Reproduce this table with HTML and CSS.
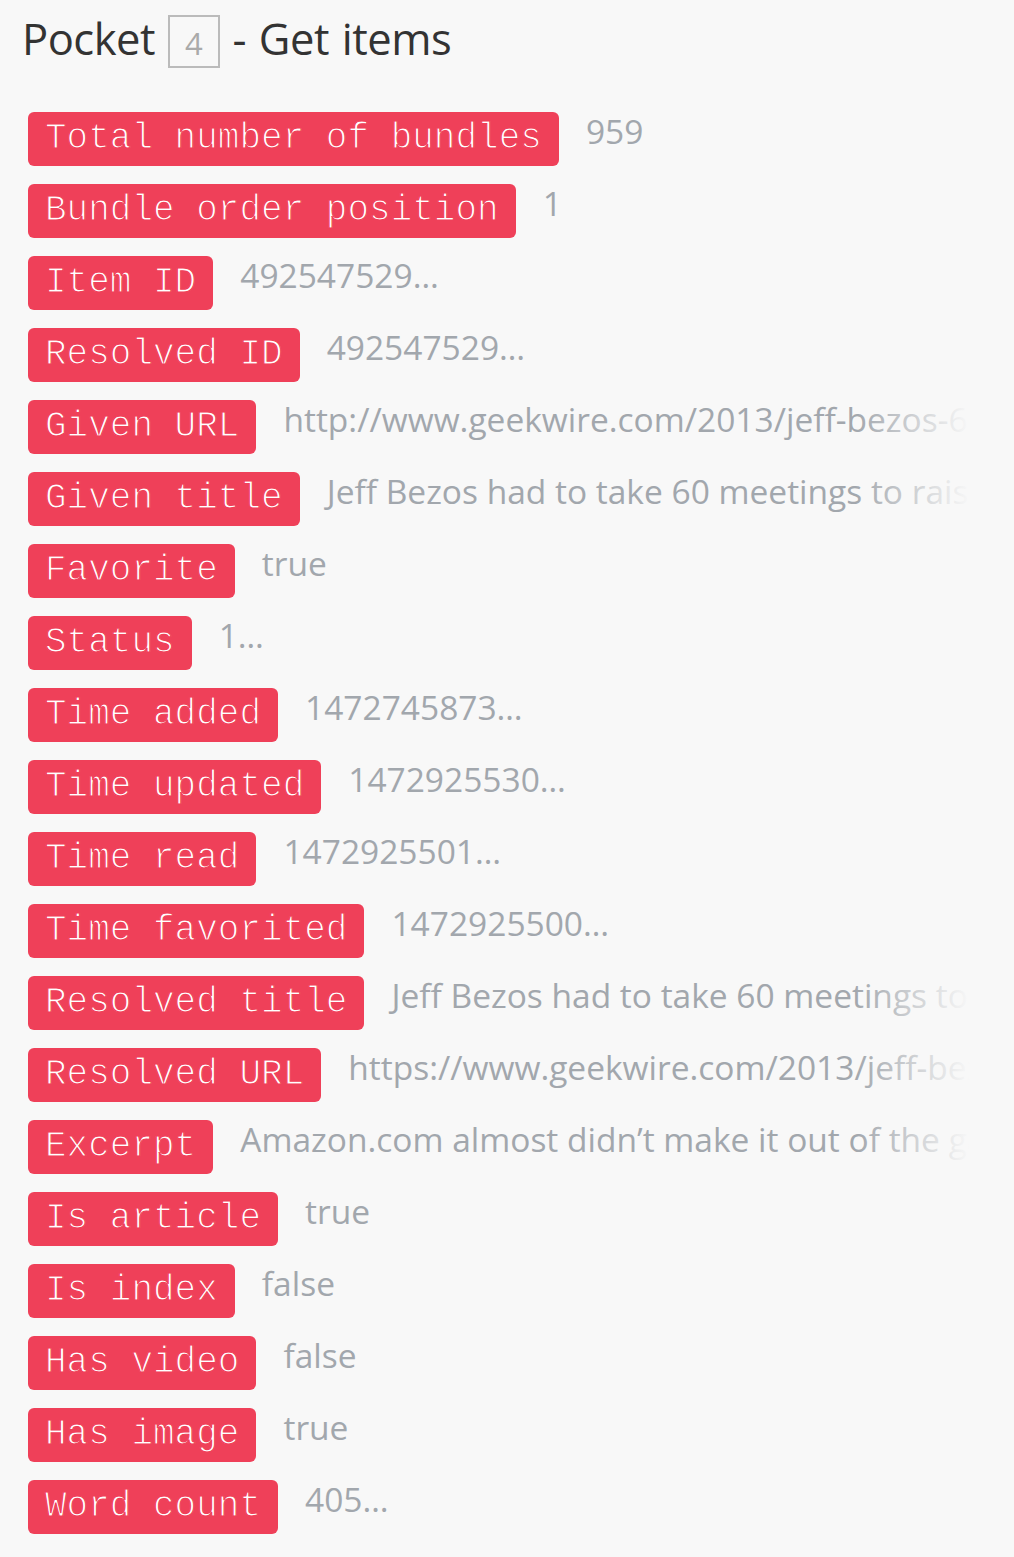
FILE: index.html
```html
<!DOCTYPE html>
<html lang="en">
<head>
    <meta charset="UTF-8">
    <meta name="viewport" content="width=device-width, initial-scale=1.0">
    <title>Pocket - Get items</title>
    <link rel="stylesheet" href="styles.css">
</head>
<body>
    <div class="page">
        <h1 class="title">Pocket <span class="count">4</span> - Get items</h1>

        <ul class="fields">
            <li><span class="tag">Total number of bundles</span><span class="value">959</span></li>
            <li><span class="tag">Bundle order position</span><span class="value">1</span></li>
            <li><span class="tag">Item ID</span><span class="value">492547529…</span></li>
            <li><span class="tag">Resolved ID</span><span class="value">492547529…</span></li>
            <li><span class="tag">Given URL</span><span class="value">http://www.geekwire.com/2013/jeff-bezos-60-meetings-raise-1m-amazon</span></li>
            <li><span class="tag">Given title</span><span class="value">Jeff Bezos had to take 60 meetings to raise $1M for Amazon</span></li>
            <li><span class="tag">Favorite</span><span class="value">true</span></li>
            <li><span class="tag">Status</span><span class="value">1…</span></li>
            <li><span class="tag">Time added</span><span class="value">1472745873…</span></li>
            <li><span class="tag">Time updated</span><span class="value">1472925530…</span></li>
            <li><span class="tag">Time read</span><span class="value">1472925501…</span></li>
            <li><span class="tag">Time favorited</span><span class="value">1472925500…</span></li>
            <li><span class="tag">Resolved title</span><span class="value">Jeff Bezos had to take 60 meetings to raise $1M for Amazon</span></li>
            <li><span class="tag">Resolved URL</span><span class="value">https://www.geekwire.com/2013/jeff-bezos-60-meetings-raise-1m-amazon/</span></li>
            <li><span class="tag">Excerpt</span><span class="value">Amazon.com almost didn’t make it out of the gate</span></li>
            <li><span class="tag">Is article</span><span class="value">true</span></li>
            <li><span class="tag">Is index</span><span class="value">false</span></li>
            <li><span class="tag">Has video</span><span class="value">false</span></li>
            <li><span class="tag">Has image</span><span class="value">true</span></li>
            <li><span class="tag">Word count</span><span class="value">405…</span></li>
        </ul>
    </div>
</body>
</html>
```

FILE: styles.css
```css
body { margin: 0; padding: 0; background: #f8f8f8; font-family: 'Open Sans', 'Noto Sans', sans-serif; }
.page { padding: 0 34px 0 28px; }
.title { margin: 0 0 0 -6px; padding-top: 10px; height: 106px; box-sizing: border-box; font-size: 43.5px; font-weight: normal; line-height: 58px; letter-spacing: -0.5px; word-spacing: 2px; color: #333; }
.count { display: inline-block; box-sizing: border-box; width: 52px; height: 53px; border: 2px solid #bbb; font-size: 31px; line-height: 53px; letter-spacing: 0; text-align: center; color: #aaa; vertical-align: 0; }
.fields { position: relative; list-style: none; margin: 0; padding: 6px 0 0; overflow: hidden; }
.fields::after { content: ""; position: absolute; top: 0; right: 0; bottom: 0; width: 125px; background: linear-gradient(to right, rgba(248, 248, 248, 0), #f8f8f8 92%); }
.fields li { display: flex; align-items: flex-start; gap: 27px; white-space: nowrap; margin-bottom: 18px; }
.tag { flex: none; height: 54px; padding: 0 17px; border-radius: 6px; background: #ef4059; color: #fff; font-family: 'Liberation Mono', 'Courier New', monospace; font-size: 36px; line-height: 54px; -webkit-text-stroke: 1.2px #ef4059; }
.value { font-size: 33.5px; line-height: normal; margin-top: -4px; color: #a2a7ad; }
```
